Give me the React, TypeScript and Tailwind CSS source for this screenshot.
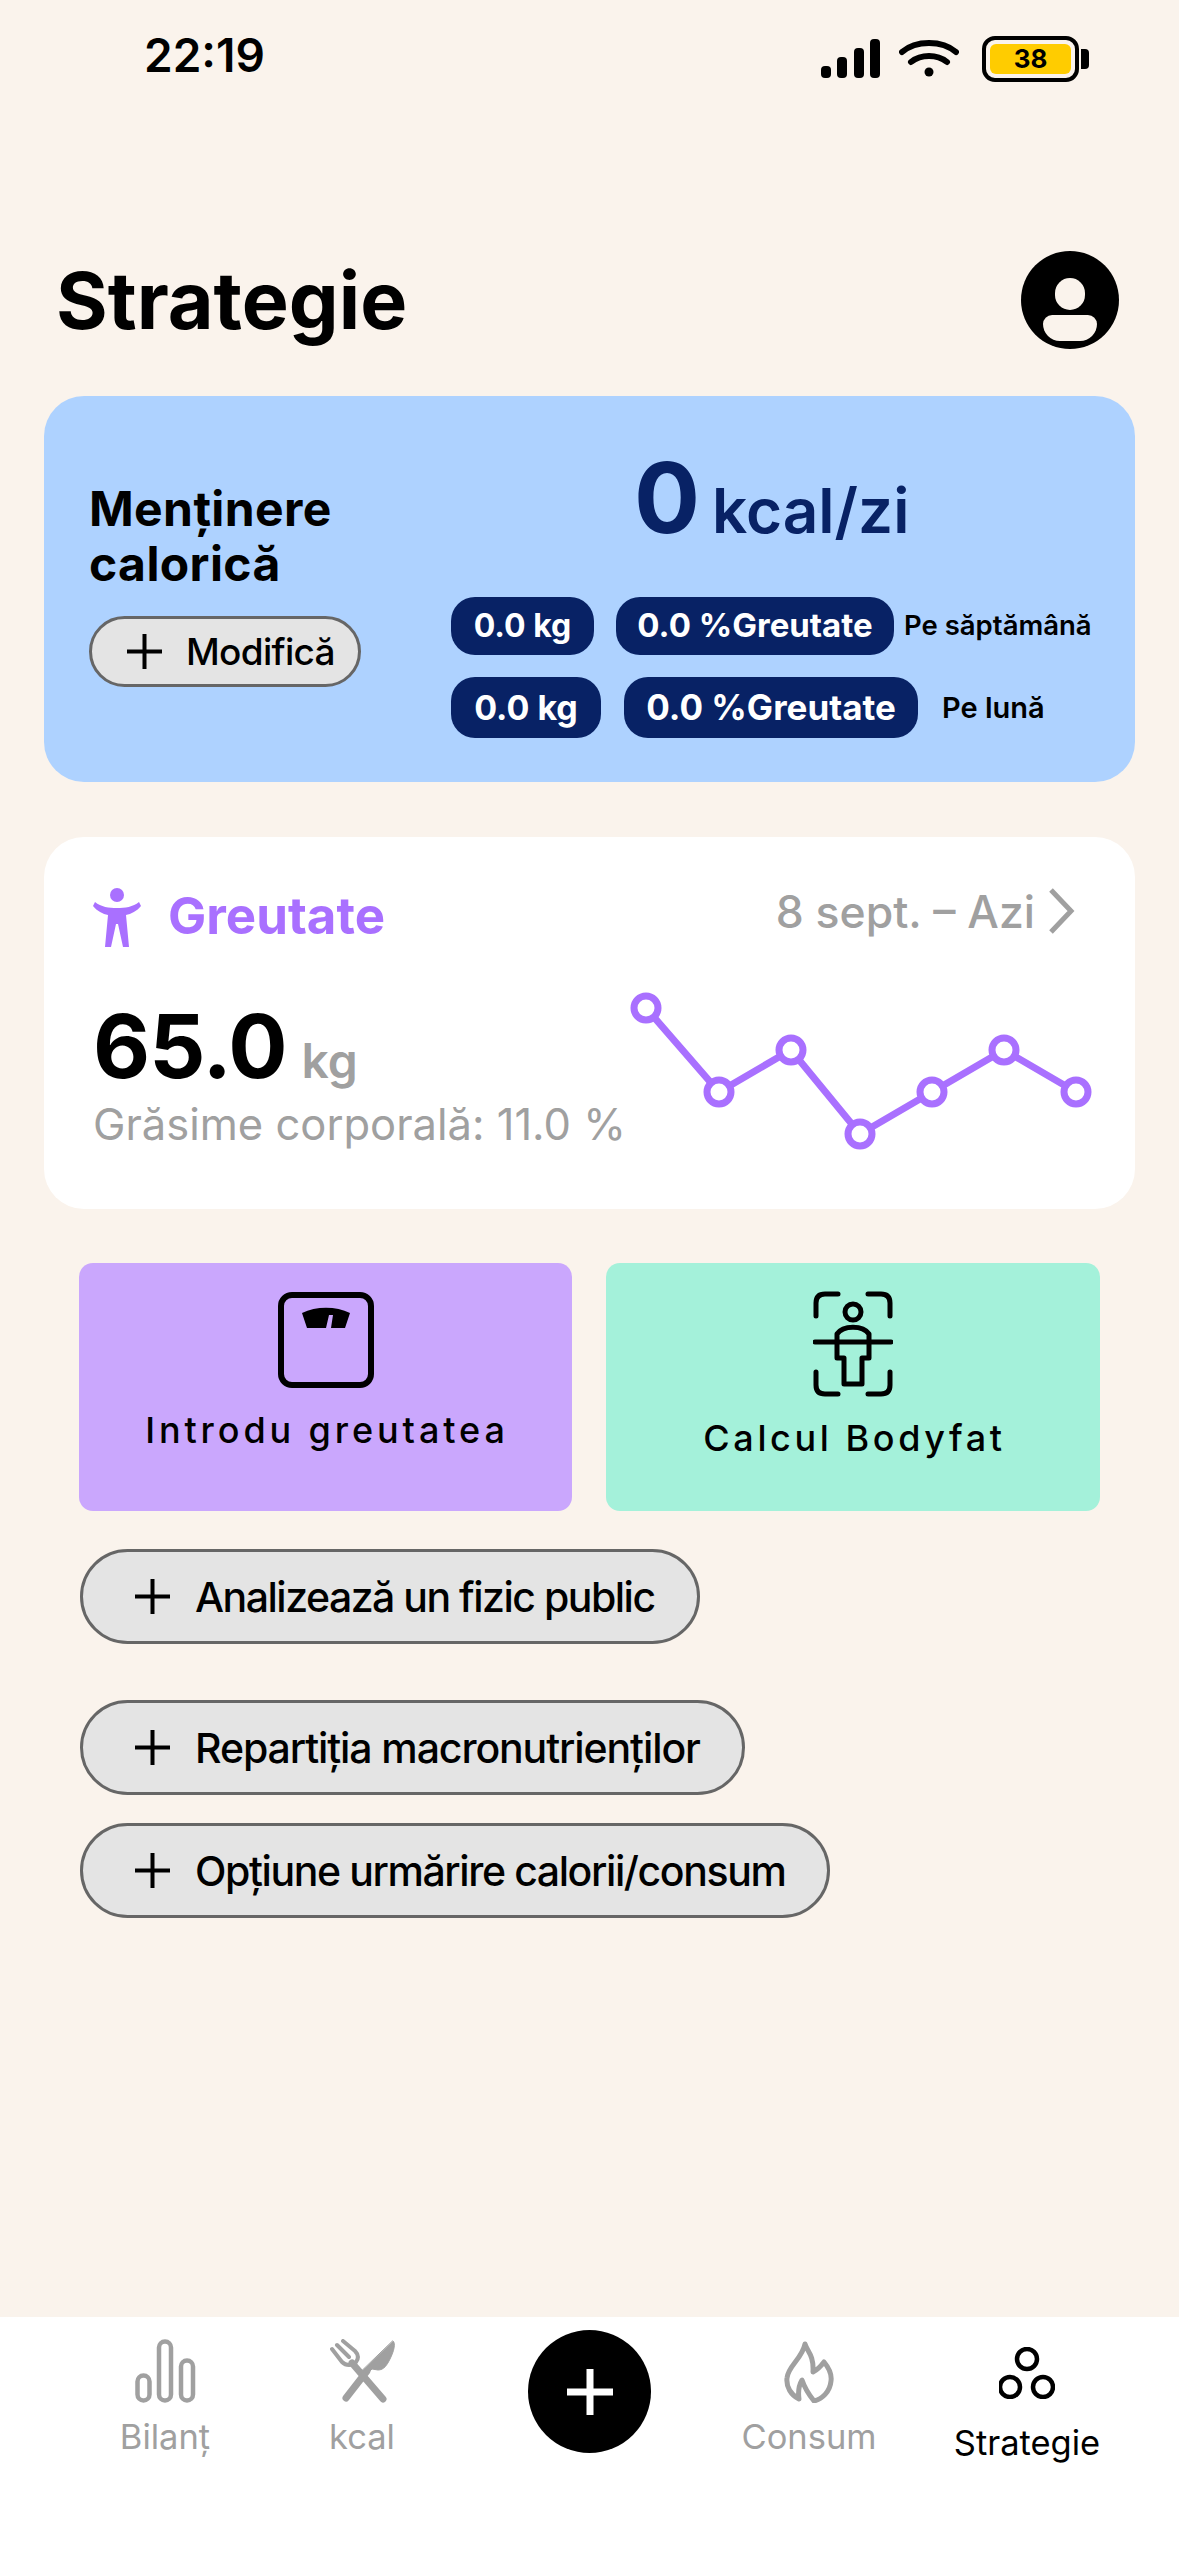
import React from 'react';

const PlusIcon = ({ size = 35, stroke = 4, color = '#000' }: { size?: number; stroke?: number; color?: string }) => (
  <svg width={size} height={size} viewBox={`0 0 ${size} ${size}`} className="shrink-0">
    <path d={`M${size / 2} 0V${size}M0 ${size / 2}H${size}`} stroke={color} strokeWidth={stroke} fill="none" />
  </svg>
);

const StatusBar = () => (
  <div className="flex items-center h-[50px] mt-[30px] pl-[144px]">
    <span className="text-[46px] font-semibold leading-none text-black">22:19</span>
    <div className="ml-auto mr-[90px] mt-[7px] flex items-center">
      <svg width="60" height="40" viewBox="0 0 60 40" className="mr-[18px]">
        <rect x="0" y="27" width="10" height="12" rx="4" fill="#000" />
        <rect x="16" y="18" width="10" height="21" rx="4" fill="#000" />
        <rect x="33" y="9" width="10" height="30" rx="4" fill="#000" />
        <rect x="49" y="0" width="10" height="39" rx="4" fill="#000" />
      </svg>
      <svg width="60" height="40" viewBox="0 0 60 40" className="mr-[23px]">
        <path d="M3 13C17 1 43 1 57 13M12 23C22 15 38 15 48 23" stroke="#000" strokeWidth="6" strokeLinecap="round" fill="none" />
        <circle cx="30" cy="33" r="4.5" fill="#000" />
      </svg>
      <div className="w-[97px] h-[46px] rounded-[13px] border-[4px] border-black p-[4px]">
        <div className="h-full rounded-[6px] bg-[#ffcc00] flex items-center justify-center text-[26px] font-bold text-black leading-none">38</div>
      </div>
      <div className="w-[8px] h-[20px] ml-[2px] rounded-r-[4px] bg-black" />
    </div>
  </div>
);

const ChipRow = ({ kg, pct, label, large }: { kg: string; pct: string; label: string; large?: boolean }) => (
  <div className={`flex items-center ${large ? 'h-[61px] mt-[22px]' : 'h-[58px] mt-0'}`}>
    <div className={`h-full flex items-center rounded-[24px] bg-[#082265] text-white font-bold ${large ? 'text-[34px] w-[150px] justify-center' : 'text-[32px] w-[143px] justify-center'}`}>{kg}</div>
    <div className={`h-full flex items-center rounded-[24px] bg-[#082265] text-white font-bold justify-center ${large ? 'text-[35px] w-[294px] ml-[23px]' : 'text-[33px] w-[278px] ml-[22px]'}`}>{pct}</div>
    <span className={`font-semibold text-black whitespace-nowrap ${large ? 'text-[29px] ml-[24px]' : 'text-[27.5px] ml-[10px]'}`}>{label}</span>
  </div>
);

const PillButton = ({ label, className, textClass }: { label: string; className: string; textClass: string }) => (
  <button className={`w-fit h-[95px] flex items-center rounded-full border-[3px] border-[#666666] bg-[#e4e4e4] pl-[52px] pr-[42px] ${className}`}>
    <PlusIcon />
    <span className={`ml-[25px] mt-[2px] text-[41px] font-medium text-black whitespace-nowrap ${textClass}`}>{label}</span>
  </button>
);

const WeightChart = () => {
  const pts = [
    [16, 18], [89, 102], [161, 60], [230, 144], [302, 102], [374, 60], [446, 102],
  ];
  return (
    <svg width="462" height="162" viewBox="0 0 462 162" className="shrink-0">
      <polyline points={pts.map(p => p.join(',')).join(' ')} fill="none" stroke="#a970ff" strokeWidth="7" />
      {pts.map(p => (
        <circle key={p[0]} cx={p[0]} cy={p[1]} r="12" fill="#fff" stroke="#a970ff" strokeWidth="7" />
      ))}
    </svg>
  );
};

const NavItem = ({ label, icon, active, className }: { label: string; icon: React.ReactNode; active?: boolean; className: string }) => (
  <div className={`w-[160px] flex flex-col items-center ${className}`}>
    <div className="h-[66px] flex items-end justify-center">{icon}</div>
    <span className={`text-[34.5px] leading-[40px] whitespace-nowrap ${active ? 'text-black mt-[24px]' : 'text-[#a0a0a0] mt-[14px]'}`}>{label}</span>
  </div>
);

export default function App() {
  return (
    <div className="w-[1179px] h-[2556px] flex flex-col bg-[#faf3ec] font-['Inter',sans-serif] overflow-hidden">
      <StatusBar />

      <div className="flex items-center justify-between h-[98px] mt-[171px] pl-[56px] pr-[60px]">
        <h1 className="text-[79px] font-bold leading-none text-black">Strategie</h1>
        <div className="relative w-[98px] h-[98px] rounded-full bg-black overflow-hidden">
          <div className="absolute left-[34px] top-[27px] w-[30px] h-[32px] rounded-full bg-[#faf3ec]" />
          <div className="absolute left-[22px] top-[64px] w-[54px] h-[26px] rounded-t-[14px] rounded-b-[26px] bg-[#faf3ec]" />
        </div>
      </div>

      {/* blue summary card */}
      <section className="mx-[44px] mt-[47px] h-[386px] rounded-[40px] bg-[#aed2ff] flex">
        <div className="w-[407px] pl-[45px] pt-[85px]">
          <h2 className="text-[48px] font-bold tracking-[0.4px] leading-[55px] text-black">Menținere<br />calorică</h2>
          <button className="mt-[25px] w-[272px] h-[71px] flex items-center rounded-full border-[3px] border-[#666666] bg-[#e4e4e4] pl-[35px]">
            <PlusIcon />
            <span className="ml-[24px] text-[37px] font-medium tracking-[-0.7px] text-black">Modifică</span>
          </button>
        </div>
        <div className="pt-[53px]">
          <div className="flex items-baseline h-[98px] pl-[183px] text-[#082265]">
            <span className="text-[98px] font-bold leading-[98px]">0</span>
            <span className="ml-[12px] text-[62px] font-semibold leading-none">kcal/zi</span>
          </div>
          <div className="mt-[50px]">
            <ChipRow kg="0.0 kg" pct="0.0 %Greutate" label="Pe săptămână" />
            <ChipRow kg="0.0 kg" pct="0.0 %Greutate" label="Pe lună" large />
          </div>
        </div>
      </section>

      {/* weight card */}
      <section className="mx-[44px] mt-[55px] h-[372px] rounded-[40px] bg-white pl-[49px] pt-[51px]">
        <div className="flex items-center h-[59px]">
          <svg width="48" height="59" viewBox="0 0 48 59" className="shrink-0">
            <circle cx="24" cy="7" r="7" fill="#a970ff" />
            <path d="M2 14C8 19 16 20 24 20C32 20 40 19 46 14L48 18C44 23 38 26 33 27L36 59H30L25 36H23L18 59H12L15 27C10 26 4 23 0 18Z" fill="#a970ff" />
          </svg>
          <span className="ml-[27px] mb-[2px] text-[51px] font-bold text-[#a970ff]">Greutate</span>
          <div className="ml-auto mr-[60px] mb-[10px] flex items-center">
            <span className="text-[44.5px] font-medium text-[#a0a0a0]">8 sept. – Azi</span>
            <svg width="28" height="46" viewBox="0 0 28 46" className="ml-[12px] mb-[4px]">
              <path d="M4 2L24 23L4 44" fill="none" stroke="#a0a0a0" strokeWidth="5" />
            </svg>
          </div>
        </div>
        <div className="flex mt-[43px]">
          <div className="w-[537px] shrink-0 pt-[11px]">
            <div className="flex items-baseline h-[90px]">
              <span className="text-[88px] font-bold tracking-[-1px] leading-[90px] text-black">65.0</span>
              <span className="ml-[15px] text-[48px] font-semibold leading-none text-[#a0a0a0]">kg</span>
            </div>
            <p className="mt-[9px] text-[43.5px] leading-[48px] text-[#a0a0a0] whitespace-nowrap">Grăsime corporală: 11.0 %</p>
          </div>
          <WeightChart />
        </div>
      </section>

      {/* action tiles */}
      <div className="flex gap-[34px] mx-[79px] mt-[54px]">
        <button className="w-[493px] h-[248px] rounded-[14px] bg-[#caa7fd] flex flex-col items-center pt-[29px]">
          <svg width="96" height="96" viewBox="0 0 96 96">
            <rect x="3" y="3" width="90" height="90" rx="11" fill="none" stroke="#000" strokeWidth="6" />
            <path d="M24 21C38 14 58 14 72 21L67 36H53L55 23H51L48 36H29Z" fill="#000" />
          </svg>
          <span className="mt-[22px] ml-[3px] text-[36px] font-medium tracking-[3.9px] leading-[40px] text-black">Introdu greutatea</span>
        </button>
        <button className="w-[494px] h-[248px] rounded-[14px] bg-[#a4f1da] flex flex-col items-center pt-[28px]">
          <svg width="80" height="106" viewBox="0 0 80 106">
            <g fill="none" stroke="#000" strokeWidth="5" strokeLinecap="round" strokeLinejoin="round">
              <path d="M3 25V12Q3 3 12 3H25M55 3H68Q77 3 77 12V25M3 81V94Q3 103 12 103H25M55 103H68Q77 103 77 94V81" />
              <circle cx="40" cy="21" r="8" />
              <path d="M2 51H78" />
              <path d="M24 67V43C30 34 50 34 56 43V67H49V93H31V67Z" />
            </g>
          </svg>
          <span className="mt-[21px] ml-[3px] text-[36px] font-medium tracking-[3.6px] leading-[40px] text-black">Calcul Bodyfat</span>
        </button>
      </div>

      <PillButton label="Analizează un fizic public" className="ml-[80px] mt-[38px]" textClass="tracking-[-1.5px]" />
      <PillButton label="Repartiția macronutrienților" className="ml-[80px] mt-[56px]" textClass="tracking-[-1.1px]" />
      <PillButton label="Opțiune urmărire calorii/consum" className="ml-[80px] mt-[28px]" textClass="tracking-[-1.4px]" />

      {/* tab bar */}
      <nav className="mt-auto h-[239px] bg-white flex items-start pl-[85px] pt-[13px]">
        <NavItem
          label="Bilanț"
          className="mt-[7px]"
          icon={
            <svg width="61" height="64" viewBox="0 0 61 64" fill="none" stroke="#a0a0a0" strokeWidth="4.5">
              <rect x="2.5" y="36.5" width="12" height="25" rx="6" />
              <rect x="24" y="2.5" width="12" height="59" rx="6" />
              <rect x="46" y="21.5" width="12" height="40" rx="6" />
            </svg>
          }
        />
        <NavItem
          label="kcal"
          className="ml-[37px] mt-[7px]"
          icon={
            <svg width="65" height="64" viewBox="0 0 65 64" fill="none" stroke="#a0a0a0" strokeLinecap="round" strokeLinejoin="round">
              <path d="M2 10L12 23C16 27 22 27 26 23C29 19 28 15 25 12L13 2M7 6L19 18" strokeWidth="4" />
              <path d="M22 24L53 60M37 32L16 59" strokeWidth="7" />
              <path d="M63 2C66 4 64 12 60 20C57 26 54 31 48 31L42 30L36 36L32 32Z" fill="#a0a0a0" strokeWidth="1" />
            </svg>
          }
        />
        <button className="w-[123px] h-[123px] ml-[86px] rounded-full bg-black flex items-center justify-center shrink-0">
          <PlusIcon size={46} stroke={7} color="#fff" />
        </button>
        <NavItem
          label="Consum"
          className="ml-[78px] mt-[7px]"
          icon={
            <svg width="50" height="62" viewBox="0 0 50 62" fill="none" stroke="#a0a0a0" strokeWidth="5" strokeLinejoin="round">
              <path d="M21 3C23 10 30 14 29 31C33 29 37 25 40 21C45 27 48 33 47 40C46 51 38 58 30 60C26 55 21 48 18 39C15 44 14 51 15 58C7 54 2 46 3 37C4 25 18 18 21 3Z" />
            </svg>
          }
        />
        <NavItem
          label="Strategie"
          active
          className="ml-[58px] mt-[3px]"
          icon={
            <svg width="56" height="52" viewBox="0 0 56 52" fill="none" stroke="#000" strokeWidth="4.5">
              <circle cx="28" cy="12" r="10" />
              <circle cx="11" cy="40" r="10" />
              <circle cx="44" cy="40" r="10" />
            </svg>
          }
        />
      </nav>
    </div>
  );
}
